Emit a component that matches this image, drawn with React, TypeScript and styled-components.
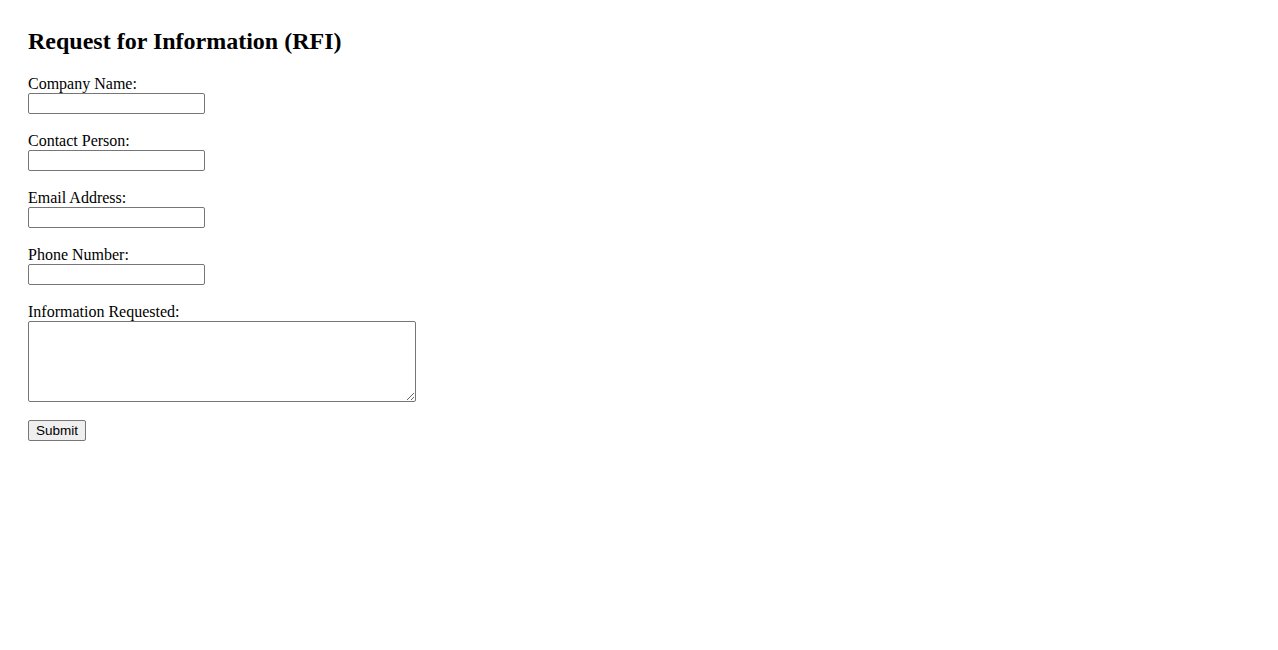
import React from "react";
import styled, { createGlobalStyle } from "styled-components";

const Global = createGlobalStyle`
  html, body { margin: 0; padding: 0; background: #fff; }
  body { font-family: "Liberation Serif", "Times New Roman", serif; font-size: 16px; color: #000; }
`;

const Page = styled.div`
  padding: 28px;
`;

const Title = styled.h2`
  margin: 0 0 20px;
  font-size: 24px;
  line-height: 26px;
  font-weight: bold;
`;

const Form = styled.form`
  display: flex;
  flex-direction: column;
  align-items: flex-start;
`;

const Field = styled.div<{ $gap?: number }>`
  display: flex;
  flex-direction: column;
  align-items: flex-start;
  margin-bottom: ${(p) => p.$gap ?? 17}px;
`;

const Label = styled.label`
  display: block;
  line-height: 19px;
  font-size: 16px;
`;

const Input = styled.input`
  box-sizing: border-box;
  width: 177px;
  height: 21px;
  margin: 0;
  padding: 1px 2px;
  border: 1px solid #767676;
  border-radius: 2px;
  font-family: "Liberation Sans", Arial, sans-serif;
  font-size: 13.333px;
  background: #fff;
`;

const TextArea = styled.textarea`
  box-sizing: border-box;
  width: 388px;
  height: 81px;
  margin: 0;
  padding: 2px;
  border: 1px solid #767676;
  border-radius: 2px;
  font-family: "Liberation Mono", monospace;
  font-size: 13.333px;
  background: #fff;
`;

const Button = styled.button`
  box-sizing: border-box;
  width: 58px;
  height: 21px;
  margin: 0;
  padding: 1px 0;
  border: 1px solid #767676;
  border-radius: 2px;
  background: #efefef;
  font-family: "Liberation Sans", Arial, sans-serif;
  font-size: 13.5px;
  color: #000;
  line-height: 15px;
  text-align: center;
`;

const fields = [
  { id: "company", label: "Company Name:", type: "text" },
  { id: "contact", label: "Contact Person:", type: "text" },
  { id: "email", label: "Email Address:", type: "email" },
  { id: "phone", label: "Phone Number:", type: "tel" },
];

export default function App() {
  return (
    <>
      <Global />
      <Page>
        <Title>Request for Information (RFI)</Title>
        <Form onSubmit={(e) => e.preventDefault()}>
          {fields.map((f) => (
            <Field key={f.id}>
              <Label htmlFor={f.id}>{f.label}</Label>
              <Input id={f.id} type={f.type} />
            </Field>
          ))}
          <Field $gap={18}>
            <Label htmlFor="info">Information Requested:</Label>
            <TextArea id="info" />
          </Field>
          <Button type="submit">Submit</Button>
        </Form>
      </Page>
    </>
  );
}
